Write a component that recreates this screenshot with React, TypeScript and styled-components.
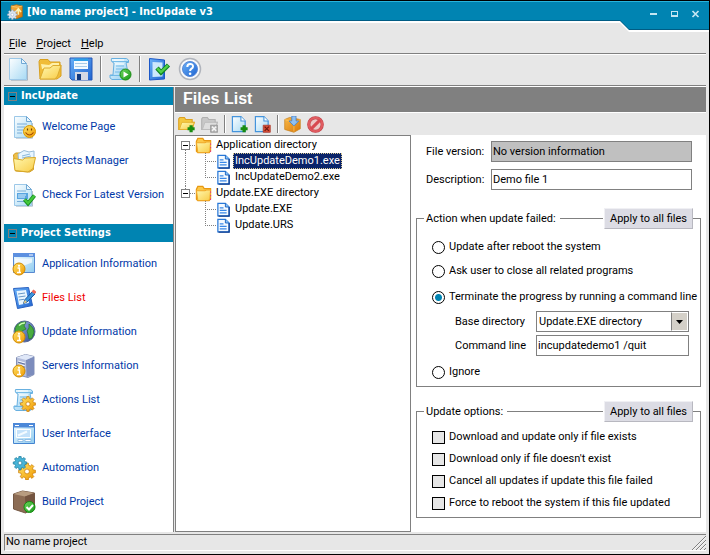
import React, { useState } from "react";
import styled, { createGlobalStyle } from "styled-components";

const ui = 'Roboto, "DejaVu Sans Condensed", sans-serif';
const heading = '"DejaVu Sans Condensed", "DejaVu Sans", sans-serif';
const blue = "#0084b2";
const face = "#e7e7e7";
const line = "#808080";

const GlobalStyle = createGlobalStyle`
  * { box-sizing: border-box; }
  body { margin: 0; font: 11px/16px ${ui}; color: #000; background: ${face}; }
  button, input, select { font: inherit; color: inherit; margin: 0; border-radius: 0; }
`;

const Window = styled.div`
  min-height: 100vh;
  display: flex;
  flex-direction: column;
  border: 1px solid #000;
  background: ${face};
`;

const TitleBar = styled.header`
  display: flex;
  align-items: flex-start;
  height: 31px;
`;

const TitleMain = styled.div`
  flex: 1;
  height: 22px;
  display: flex;
  align-items: center;
  gap: 4px;
  padding-left: 6px;
  background: linear-gradient(#28b4dc 0 1px, ${blue} 1px 19px, #005c84 19px 20px, #fff 20px);
`;

const TitleText = styled.h1`
  margin: 0;
  font: bold 11px/20px ${heading};
  color: #fff;
  white-space: nowrap;
`;

const WindowButtons = styled.div`
  height: 31px;
  display: flex;
  gap: 5px;
  padding: 5px 5px 0 17px;
  background: linear-gradient(#28b4dc 0 1px, ${blue} 1px 28px, #005c84 28px 29px, #fff 29px);
`;

const IconButton = styled.button<{ $size: number }>`
  display: flex;
  align-items: center;
  justify-content: center;
  width: ${(p) => p.$size}px;
  height: ${(p) => p.$size}px;
  padding: 0;
  border: 0;
  background: none;
`;

const Body = styled.div`
  flex: 1;
  display: flex;
  flex-direction: column;
  padding: 0 3px 3px;
`;

const Menu = styled.nav`
  display: flex;
  gap: 10px;
  height: 23px;
  padding: 3px 5px 0;
  border-bottom: 1px solid #fff;
  box-shadow: inset 0 -1px ${line};
`;

const MenuItem = styled.button`
  height: 18px;
  padding: 0;
  border: 0;
  background: none;
`;

const ToolBar = styled.div`
  display: flex;
  align-items: center;
  gap: 7px;
  height: 32px;
  padding: 0 3px 3px;
  border-bottom: 1px solid #fff;
  box-shadow: inset 0 -1px ${line};
`;

const Separator = styled.span<{ $height: number }>`
  width: 1px;
  height: ${(p) => p.$height}px;
  background: ${line};
  box-shadow: 1px 0 #fff;
`;

const Main = styled.div`
  flex: 1;
  display: flex;
`;

const Sidebar = styled.aside`
  flex: none;
  width: 171px;
  background: #fff;
  border-right: 1px solid ${face};
  box-shadow: inset -1px 0 ${line};
  padding-right: 1px;
`;

const SideHeading = styled.h2`
  display: flex;
  align-items: center;
  gap: 4px;
  height: 18px;
  margin: 0;
  padding-left: 4px;
  background: ${blue};
  color: #fff;
  font: bold 11px/18px ${heading};
`;

const SideToggle = styled.button`
  width: 9px;
  height: 9px;
  padding: 3px 1px;
  border: 1px solid ${line};
  background: #000 content-box;
`;

const SideList = styled.ul`
  list-style: none;
  margin: 0;
  padding: 5px 0 12px 8px;
`;

const SideItem = styled.li`
  display: flex;
  align-items: center;
  gap: 6px;
  height: 34px;
`;

const SideLink = styled.a<{ $current?: boolean }>`
  line-height: 18px;
  color: ${(p) => (p.$current ? "#f00000" : "#0038a8")};
  text-decoration: none;
  white-space: nowrap;
`;

const Content = styled.main`
  flex: 1;
  min-width: 0;
  display: flex;
  flex-direction: column;
`;

const PageTitle = styled.h2`
  height: 26px;
  margin: 0;
  padding-left: 8px;
  border-bottom: 1px solid #fff;
  background: ${line};
  color: #fff;
  font: bold 16px/24px "Liberation Sans", Arial, sans-serif;
`;

const FileBar = styled.div`
  display: flex;
  align-items: center;
  gap: 6px;
  height: 22px;
  padding-left: 3px;
`;

const Columns = styled.div`
  flex: 1;
  display: flex;
`;

const Tree = styled.div`
  flex: none;
  width: 236px;
  padding: 1px 5px;
  border: 1px solid ${line};
  background: #fff;
`;

const TreeRow = styled.div`
  display: flex;
  align-items: center;
  height: 16px;
`;

const Label = styled.span<{ $selected?: boolean }>`
  padding: 0 1px;
  line-height: 14px;
  margin-left: 2px;
  white-space: nowrap;
  border: 1px ${(p) => (p.$selected ? "dotted #d8c890" : "solid transparent")};
  background: ${(p) => (p.$selected ? "#0a246a" : "transparent")};
  color: ${(p) => (p.$selected ? "#fff" : "#000")};
`;

const ToggleCell = styled.div`
  display: flex;
  flex-direction: column;
  align-items: center;
  width: 9px;
  height: 16px;
`;

const Stem = styled.span<{ $on: boolean; $height: number }>`
  height: ${(p) => p.$height}px;
  border-left: 1px dotted ${(p) => (p.$on ? line : "transparent")};
`;

const Branch = styled.span`
  width: 5px;
  border-top: 1px dotted ${line};
`;

const TreeToggle = styled.button`
  width: 9px;
  height: 9px;
  padding: 3px 1px;
  border: 1px solid ${line};
  background: #000 content-box;
`;

const Details = styled.form`
  flex: 1;
  min-width: 0;
  padding: 6px 5px;
  background: #fff;
`;

const FieldRow = styled.div`
  display: flex;
  align-items: center;
  height: 21px;
  margin: 0 9px 7px 10px;
`;

const FieldLabel = styled.label<{ $width: number }>`
  width: ${(p) => p.$width}px;
  white-space: nowrap;
`;

const TextInput = styled.input`
  flex: 1;
  min-width: 0;
  height: 21px;
  padding: 0 1px;
  border: 1px solid ${line};
  background: #fff;
  outline: 0;
  &:read-only { background: #c0c0c0; }
`;

const Group = styled.fieldset<{ $top: number }>`
  min-width: 0;
  margin: ${(p) => p.$top}px 0 0;
  padding: 0 7px 6px;
  border: 1px solid ${line};
`;

const Legend = styled.legend`
  display: flex;
  align-items: center;
  width: 100%;
  height: 21px;
  padding: 0 0 0 2px;
  gap: 4px;
  white-space: nowrap;
  &::before { content: ""; order: 1; flex: 1; height: 1px; background: ${line}; }
`;

const ApplyButton = styled.button`
  order: 2;
  width: 89px;
  height: 21px;
  margin-left: -3px;
  padding: 0;
  border: 1px solid #f0f0f4;
  border-right-color: #b8b8c0;
  border-bottom-color: #b8b8c0;
  background: #dcdce4;
`;

const Choices = styled.div<{ $gap: number; $top: number }>`
  display: flex;
  flex-direction: column;
  gap: ${(p) => p.$gap}px;
  padding: ${(p) => p.$top}px 0 0 8px;
`;

const Choice = styled.label`
  display: flex;
  align-items: center;
  gap: 4px;
  height: 16px;
  white-space: nowrap;
`;

const Radio = styled.input.attrs({ type: "radio" })`
  appearance: none;
  flex: none;
  width: 13px;
  height: 13px;
  border: 1px solid #000;
  border-radius: 50%;
  background: #fff;
  &:checked { background: radial-gradient(circle, ${blue} 3px, #fff 4px); }
`;

const Check = styled.input.attrs({ type: "checkbox" })`
  appearance: none;
  flex: none;
  width: 13px;
  height: 13px;
  border: 1px solid #000;
  background: #e6e6e6;
  &:checked { background: ${blue}; }
`;

const CommandGroup = styled.div`
  display: flex;
  flex-direction: column;
  gap: 6px;
  padding: 2px 0 0;
`;

const CommandFields = styled.div`
  display: flex;
  flex-direction: column;
  gap: 3px;
  padding: 0 4px 0 23px;
`;

const CommandRow = styled.div`
  display: flex;
  align-items: center;
`;

const SelectBox = styled.div`
  flex: 1;
  display: flex;
  height: 21px;
  border: 1px solid ${line};
`;

const Select = styled.select`
  flex: 1;
  min-width: 0;
  appearance: none;
  padding: 0 2px;
  border: 0;
  background: #fff;
  outline: 0;
`;

const SelectArrow = styled.span`
  display: flex;
  align-items: center;
  justify-content: center;
  width: 17px;
  border: 1px solid #fff;
  border-left-color: ${line};
  background: #d4d0c8;
`;

const StatusBar = styled.footer`
  display: flex;
  justify-content: space-between;
  align-items: flex-end;
  height: 17px;
  margin-top: 2px;
  padding-left: 1px;
  border: 1px solid ${line};
  border-right: 0;
  border-bottom-color: #fff;
`;

/* ---------- icons ---------- */

const gear = (cx: number, cy: number, r: number, n = 8) => {
  const pts: string[] = [];
  for (let i = 0; i < n; i++) {
    [[-0.3, 0.76], [-0.2, 1], [0.2, 1], [0.3, 0.76]].forEach(([o, k]) => {
      const a = ((i + o) / n) * Math.PI * 2;
      pts.push(`${(cx + Math.cos(a) * r * k).toFixed(2)},${(cy + Math.sin(a) * r * k).toFixed(2)}`);
    });
  }
  return pts.join(" ");
};

const Gear = ({ x, y, r, fill = "url(#gold)", edge = "#c87800" }: { x: number; y: number; r: number; fill?: string; edge?: string }) => (
  <g>
    <polygon points={gear(x, y, r)} fill={fill} stroke={edge} strokeWidth=".7" strokeLinejoin="round" />
    <circle cx={x} cy={y} r={r * 0.28} fill="#fff" stroke={edge} strokeWidth=".7" />
  </g>
);

const Info = ({ x, y }: { x: number; y: number }) => (
  <g>
    <circle cx={x} cy={y} r="6" fill="url(#gold)" stroke="#d08a00" />
    <path d={`M${x - 1.5} ${y - 1}h2v4M${x - 2} ${y + 3.5}h4`} stroke="#fff" strokeWidth="1.4" fill="none" />
    <circle cx={x} cy={y - 3.2} r="1.1" fill="#fff" />
  </g>
);

const Page = () => (
  <g>
    <path d="M4 23.200h16.500V8" fill="none" stroke="#5c7890" strokeOpacity=".45" />
    <path d="M2.500 1.500h12l5 5v16h-17z" fill="url(#paper)" stroke="#9cc8e8" />
    <path d="M14.500 1.500v5h5z" fill="#e8f6ff" stroke="#70a8d4" />
  </g>
);

const Tick = () => <path d="M12.500 16.500l3.500 4 6.500-8" fill="none" stroke="#128a1c" strokeWidth="4" />;
const TickFront = () => <path d="M12.800 16.700l3.200 3.500 6.300-7.500" fill="none" stroke="#44c83c" strokeWidth="2.400" />;

const Scroll = () => (
  <g>
    <path d="M3.500 1.500h15q3 1 2 4h-2.500l2.500 13q0 4-3 4H4q-3-1-2-4.500h3L6 6Q2.500 5 3.500 1.500z" fill="url(#sky)" stroke="#68b0e0" />
    <path d="M4 4.500h16M8 9h8M8 12h8M7 15h9M2.500 18.500h13" fill="none" stroke="#60b0e4" strokeOpacity=".8" />
    <path d="M6 3h10M7 7h9" stroke="#fff" />
  </g>
);

const glyphs: Record<string, React.ReactNode> = {
  app: (
    <g>
      <path d="M6 3l8-2 9 2v16l-9 3-8-3z" fill="url(#box)" stroke="#b86400" />
      <path d="M6 3l9 2 8-2" stroke="#ffd080" fill="none" />
      <path d="M17 16V9m-4 3l4-5 4 5" stroke="#fff4b0" strokeWidth="2.400" fill="none" />
      <Gear x={8} y={16} r={7.5} fill="#d8e4f0" edge="#8c9cb8" />
    </g>
  ),
  page: <Page />,
  folder: (
    <g>
      <path d="M1 4.500l1-2h8l2 2.500h10v3h1v11L19 22H2z" fill="#f0bc38" stroke="#d8a020" />
      <path d="M3 7l8 1 3-2h7v6H4z" fill="#fff0a8" />
      <path d="M2 22L6 11h6l3-2.500h8L19.500 19l-2.500 3z" fill="url(#yellow)" stroke="#dcac30" />
    </g>
  ),
  save: (
    <g>
      <path d="M1 1h22v22H3l-2-2z" fill="url(#disk)" stroke="#2458b8" />
      <path d="M5 2h14v10H5z" fill="#f4fbff" />
      <path d="M6 6.500h12M6 9.500h12" stroke="#a8cce8" />
      <path d="M6 15h13v8H6z" fill="#d4d8e4" />
      <path d="M8 17h4v6H8z" fill="#103880" />
      <path d="M5 1.500h14v2.500H5z" fill="#30a0e8" />
    </g>
  ),
  run: (
    <g>
      <Scroll />
      <circle cx="17.500" cy="17.500" r="5.500" fill="url(#green)" stroke="#168a10" />
      <path d="M15.500 14.500l5 3-5 3z" fill="#fff" />
    </g>
  ),
  tasktick: (
    <g>
      <path d="M2.500 1.500l15 1.500v19l-15 1z" fill="url(#disk)" stroke="#1c58c8" />
      <path d="M5.500 5l10 .5v14l-10 .5z" fill="#cce8fc" />
      <path d="M10 11l4 4.500L21.500 8" fill="none" stroke="#108424" strokeWidth="4.500" />
      <path d="M10.300 11.300l3.700 3.700 7-6.600" fill="none" stroke="#50d048" strokeWidth="2.400" />
    </g>
  ),
  help: (
    <g>
      <circle cx="12" cy="12" r="10.500" fill="#f8fafc" stroke="#b0b4bc" strokeWidth="1.500" />
      <circle cx="12" cy="12" r="7.500" fill="url(#disk)" stroke="#5888d8" />
      <path d="M9.300 10q0-3 2.900-3t2.800 2.500q0 1.200-1.500 2.200t-1.400 2.300" fill="none" stroke="#fff" strokeWidth="2" />
      <circle cx="12.100" cy="16.800" r="1.300" fill="#fff" />
    </g>
  ),
  welcome: (
    <g>
      <Page />
      <path d="M5 9h10M5 12h8M5 15h6M5 18h5" stroke="#78acd8" />
      <circle cx="17.500" cy="16.500" r="6" fill="url(#gold)" stroke="#d89800" />
      <path d="M15.500 13.500v2m4-2v2" stroke="#704000" strokeWidth="1.200" />
      <path d="M13.500 17.500q4 5 8 0" fill="none" stroke="#a04800" strokeWidth="1.200" />
    </g>
  ),
  projects: (
    <g>
      <path d="M1.500 6l2-2h6l2 2.500 10 1v13l-4 2.500-14-1z" fill="#f0c048" stroke="#d09c20" />
      <path d="M6 5l6-3.500 5 1.500 5-1v10l-15 3z" fill="#e8f6ff" stroke="#98bcd8" />
      <path d="M10 7l8-2M10 9l9-2" stroke="#88b8dc" />
      <path d="M1.500 9.500l9 1.500 2.500-2 10.500-.5-2.500 11-5 3.500L3 21.500z" fill="url(#yellow)" stroke="#d8a828" />
    </g>
  ),
  latest: (
    <g>
      <Page />
      <path d="M5 10h11v6H5z" fill="#58a4e0" />
      <path d="M5 8h9M5 18.500h8" stroke="#78acd8" />
      <path d="M6 12h8M6 14h7" stroke="#d8f0ff" />
      <Tick /><TickFront />
    </g>
  ),
  appinfo: (
    <g>
      <path d="M1.500 1.500h21v19h-21z" fill="url(#sky)" stroke="#5888d0" />
      <path d="M1 1h22v4H1z" fill="#5c90e0" />
      <path d="M17 3h4" stroke="#fff" />
      <path d="M3 6.500h17v4L3 17z" fill="#fff" fillOpacity=".7" />
      <Info x={7} y={17} />
    </g>
  ),
  edit: (
    <g>
      <path d="M1.500 2.500l15-1 4 18-15 3z" fill="url(#disk)" stroke="#2860c0" />
      <path d="M4.500 5L14 4l3 13L7 19z" fill="#e8f6ff" />
      <path d="M6 8l7-1M6.500 11l7-1M7 14l5-.7" stroke="#6898c8" />
      <path d="M21 5l-8 8.500-1.500 4L15 16l8-8z" fill="#3c94dc" stroke="#1c58a0" />
      <path d="M20.500 4.500l2.800 2.500" stroke="#f06858" strokeWidth="3" />
      <path d="M13 14l-1.500 3.500L15 16z" fill="#f0d080" />
    </g>
  ),
  globe: (
    <g>
      <circle cx="12.500" cy="11.500" r="10.500" fill="url(#globe)" stroke="#586898" />
      <path d="M5 5q4-4 9-3l-2 4 2 3-4 2-2 4-5-3q0-5 2-7zM17 4q5 4 5 8l-2 6-3 1-1-5-1-3 2-3z" fill="#48ac40" stroke="#287828" strokeWidth=".7" />
      <path d="M7 5.500q3-3 6-2.500" stroke="#d0ffb8" strokeWidth="1.500" fill="none" />
      <Info x={7} y={17} />
    </g>
  ),
  server: (
    <g>
      <path d="M4.500 3.500l9-3 8.500 2v18l-6 3-11.500-3z" fill="#b4bedc" stroke="#8490b4" />
      <path d="M14 6l8-3.500v18L14.500 23z" fill="#7c8cbc" />
      <path d="M4.500 3.500l9-3L22 2.500 14 6z" fill="#e0e8f8" />
      <path d="M6 7l7 2M6 10l7 2M6 13l7 2" stroke="#f4f8ff" strokeWidth="1.300" />
      <path d="M6 8.200l7 2M6 11.200l7 2" stroke="#6070a0" />
      <Info x={7} y={17} />
    </g>
  ),
  actions: (<g><Scroll /><Gear x={16} y={16} r={7.500} /></g>),
  interface: (
    <g>
      <path d="M1.500 1.500h21v20h-21z" fill="url(#sky)" stroke="#4484d0" />
      <path d="M1 1h22v4.500H1z" fill="#4c88d8" />
      <path d="M3 3.500h4m10 0h4" stroke="#fff" />
      <path d="M4.500 7.500h14v8h-14z" fill="#c4e2fa" stroke="#fff" />
      <path d="M6 17.500h5v2H6zm7 0h6v2h-6z" fill="#fff" stroke="#78acdc" strokeWidth=".7" />
      <path d="M6 13.500l9-4" stroke="#f4fbff" strokeWidth="2" />
    </g>
  ),
  automation: (
    <g>
      <Gear x={15} y={15.500} r={8.500} />
      <Gear x={8} y={7} r={6.800} fill="#48b4d8" edge="#187898" />
    </g>
  ),
  build: (
    <g>
      <path d="M1.500 4l9-3 12 2v15l-9 5-12-4z" fill="#8c6c54" stroke="#745844" />
      <path d="M1.500 4l9-3 12 2L13 6.500z" fill="#b89c80" />
      <path d="M13 6.500L22.500 3v15L13.500 23z" fill="#745440" />
      <circle cx="17.500" cy="17" r="5.500" fill="url(#green)" stroke="#168a10" />
      <path d="M14.500 17l2.500 2.500 4-4.500" fill="none" stroke="#fff" strokeWidth="2" />
    </g>
  ),
  folderadd: (
    <g>
      <path d="M1 4l1.500-2H9l2 3h9v4h3l-3 10H1z" fill="#f4c840" stroke="#dca020" strokeWidth="1.500" />
      <path d="M2 19L5.500 9H23l-3.500 10z" fill="url(#yellow)" stroke="#e0ac28" />
      <path d="M18.500 13v10m-5-5h10" stroke="#188c10" strokeWidth="4.500" />
    </g>
  ),
  folderdel: (
    <g>
      <path d="M1 4l1.500-2H9l2 3h9v4h3l-3 10H1z" fill="#c8c8c8" stroke="#b0b0b0" strokeWidth="1.500" />
      <path d="M2 19L5.500 9H23l-3.500 10z" fill="#dedede" stroke="#b8b8b8" />
      <path d="M13.500 13h10v10h-10z" fill="#b0b0b0" stroke="#909090" />
      <path d="M15.500 15l6 6m0-6l-6 6" stroke="#f4f4f4" strokeWidth="2" />
    </g>
  ),
  fileadd: (
    <g>
      <path d="M2 1h12l6 6v15H2z" fill="url(#paper)" stroke="#4494dc" strokeWidth="1.700" />
      <path d="M14 1v6h6" fill="#fff" stroke="#4494dc" strokeWidth="1.500" />
      <path d="M18.500 13v10m-5-5h10" stroke="#188c10" strokeWidth="4.500" />
    </g>
  ),
  filedel: (
    <g>
      <path d="M2 1h12l6 6v15H2z" fill="url(#paper)" stroke="#4494dc" strokeWidth="1.700" />
      <path d="M14 1v6h6" fill="#fff" stroke="#4494dc" strokeWidth="1.500" />
      <path d="M13 13h10v10H13z" fill="#d85038" stroke="#a83020" />
      <path d="M15 15l6 6m0-6l-6 6" stroke="#701810" strokeWidth="1.800" />
    </g>
  ),
  extract: (
    <g>
      <path d="M1 5l7-3 15 3v13l-9 5-13-4z" fill="url(#box)" stroke="#c88018" />
      <path d="M1 5l13 4 9-4M14 9v13" stroke="#ffc860" fill="none" />
      <path d="M11 0h6v7h4l-7 7-7-7h4z" fill="#90c0f0" stroke="#3878c8" />
    </g>
  ),
  stop: (
    <g>
      <circle cx="12" cy="12" r="9.500" fill="#ecc8c8" stroke="#c04048" strokeWidth="4.500" />
      <circle cx="12" cy="12" r="9.500" fill="none" stroke="#e05c60" strokeWidth="3" />
      <path d="M5.500 18.500l13-13" stroke="#d84850" strokeWidth="4.500" />
    </g>
  ),
  treefolder: (
    <g>
      <path d="M2 6l2-4h7l2 3h9v14l-2 3H4l-2-2z" fill="#fcc848" stroke="#e89810" strokeWidth="1.700" />
      <path d="M2 8h12l2-1h6l-1 13-2 2H4z" fill="url(#yellow)" stroke="#f0a828" strokeWidth="1.500" />
      <path d="M22 9v2m0 3v2m0 3v2" stroke="#e83878" strokeWidth="1.500" />
    </g>
  ),
  treefile: (
    <g>
      <path d="M3 2h12l6 6v14H3z" fill="#f4faff" stroke="#2878d8" strokeWidth="2" />
      <path d="M21 8v14.500H4" fill="none" stroke="#0c3c90" strokeWidth="2" />
      <path d="M15 2v6h6" fill="#8cc4f8" stroke="#1c64c0" strokeWidth="1.500" />
      <path d="M6 9.500h6M6 13.500h11M6 17.500h11" stroke="#3888e8" strokeWidth="2" />
    </g>
  ),
};

const Icon = ({ name, size = 24 }: { name: string; size?: number }) => (
  <svg width={size} height={size} viewBox="0 0 24 24" aria-hidden="true">{glyphs[name]}</svg>
);

const ramps: [string, string, string][] = [
  ["gold", "#ffe468", "#f09800"],
  ["box", "#f8b848", "#d87808"],
  ["yellow", "#fff8b0", "#f8cc48"],
  ["sky", "#f0fbff", "#90ccf0"],
  ["paper", "#fcfeff", "#a8daf4"],
  ["disk", "#68b0f8", "#2064d0"],
  ["green", "#70d860", "#189818"],
  ["globe", "#a0c0f0", "#304890"],
];

const Gradients = () => (
  <defs>
    {ramps.map(([id, a, b]) => (
      <linearGradient key={id} id={id} x1="0" y1="0" x2="1" y2="1">
        <stop stopColor={a} /><stop offset="1" stopColor={b} />
      </linearGradient>
    ))}
  </defs>
);

/* ---------- content ---------- */

const mainTools = [["page", "New"], ["folder", "Open"], ["save", "Save"], null, ["run", "Run"], null, ["tasktick", "Check for update"], ["help", "Help"]];
const fileTools = [["folderadd", "Add directory"], ["folderdel", "Remove directory"], null, ["fileadd", "Add file"], ["filedel", "Remove file"], null, ["extract", "Extract"], ["stop", "Cancel"]];

const sections = [
  { title: "IncUpdate", items: [["welcome", "Welcome Page"], ["projects", "Projects Manager"], ["latest", "Check For Latest Version"]] },
  {
    title: "Project Settings",
    items: [
      ["appinfo", "Application Information"], ["edit", "Files List"], ["globe", "Update Information"], ["server", "Servers Information"],
      ["actions", "Actions List"], ["interface", "User Interface"], ["automation", "Automation"], ["build", "Build Project"],
    ],
  },
];

const folders = [
  { name: "Application directory", files: ["IncUpdateDemo1.exe", "IncUpdateDemo2.exe"] },
  { name: "Update.EXE directory", files: ["Update.EXE", "Update.URS"] },
];

const options = [
  "Download and update only if file exists",
  "Download only if file doesn't exist",
  "Cancel all updates if update this file failed",
  "Force to reboot the system if this file updated",
];

const Tools = ({ items, size, bar }: { items: (string[] | null)[]; size: number; bar: number }) => (
  <>
    {items.map((t, i) =>
      t ? (
        <IconButton key={i} type="button" $size={size} aria-label={t[1]}><Icon name={t[0]} size={size} /></IconButton>
      ) : (
        <Separator key={i} $height={bar} />
      )
    )}
  </>
);

const FileGuide = ({ trunk, last }: { trunk: boolean; last: boolean }) => (
  <svg width="35" height="16" aria-hidden="true">
    <path d={`${trunk ? "M4.500 0v16" : ""}M24.500 0v${last ? 8 : 16}M24 8.500h11`} stroke={line} strokeDasharray="1 1" fill="none" />
  </svg>
);

export default function App() {
  const [action, setAction] = useState("terminate");
  const radio = (id: string, text: string) => (
    <Choice>
      <Radio name="action" checked={action === id} onChange={() => setAction(id)} />
      {text}
    </Choice>
  );

  return (
    <Window>
      <GlobalStyle />
      <TitleBar>
        <TitleMain>
          <svg width="16" height="16" viewBox="0 0 24 24" aria-hidden="true"><Gradients />{glyphs.app}</svg>
          <TitleText>[No name project] - IncUpdate v3</TitleText>
        </TitleMain>
        <svg width="9" height="31" aria-hidden="true">
          <path d="M0 0h9v31L0 22z" fill="#fff" />
          <path d="M0 0h9v29L0 20z" fill="#005c84" />
          <path d="M0 1h9v27L0 19z" fill={blue} />
          <path d="M0 0h9v1H0z" fill="#28b4dc" />
        </svg>
        <WindowButtons>
          <IconButton $size={16} aria-label="Minimize"><svg width="16" height="16"><path d="M4 7h7v2H4z" fill="#c4e6f2" /></svg></IconButton>
          <IconButton $size={16} aria-label="Maximize"><svg width="16" height="16"><path d="M4 5h7v6H4zM5 6v3h5V6z" fill="#c4e6f2" fillRule="evenodd" /></svg></IconButton>
          <IconButton $size={16} aria-label="Close"><svg width="16" height="16"><path d="M4.500 5l6 6m0-6l-6 6" stroke="#c4e6f2" strokeWidth="1.700" /></svg></IconButton>
        </WindowButtons>
      </TitleBar>
      <Body>
        <Menu>
          <MenuItem><u>F</u>ile</MenuItem>
          <MenuItem><u>P</u>roject</MenuItem>
          <MenuItem><u>H</u>elp</MenuItem>
        </Menu>
        <ToolBar><Tools items={mainTools} size={24} bar={26} /></ToolBar>
        <Main>
          <Sidebar>
            {sections.map((s) => (
              <section key={s.title}>
                <SideHeading><SideToggle aria-label={`Collapse ${s.title}`} />{s.title}</SideHeading>
                <SideList>
                  {s.items.map(([icon, text]) => (
                    <SideItem key={text}>
                      <Icon name={icon} />
                      <SideLink href="#" $current={text === "Files List"}>{text}</SideLink>
                    </SideItem>
                  ))}
                </SideList>
              </section>
            ))}
          </Sidebar>
          <Content>
            <PageTitle>Files List</PageTitle>
            <FileBar><Tools items={fileTools} size={17} bar={18} /></FileBar>
            <Columns>
              <Tree>
                {folders.map((f, i) => (
                  <div key={f.name}>
                    <TreeRow>
                      <ToggleCell>
                        <Stem $on={i > 0} $height={4} />
                        <TreeToggle aria-label={`Collapse ${f.name}`} />
                        <Stem $on={i === 0} $height={3} />
                      </ToggleCell>
                      <Branch />
                      <Icon name="treefolder" size={17} />
                      <Label>{f.name}</Label>
                    </TreeRow>
                    {f.files.map((n, k) => (
                      <TreeRow key={n}>
                        <FileGuide trunk={i === 0} last={k === f.files.length - 1} />
                        <Icon name="treefile" size={15} />
                        <Label $selected={n === "IncUpdateDemo1.exe"}>{n}</Label>
                      </TreeRow>
                    ))}
                  </div>
                ))}
              </Tree>
              <Details>
                <FieldRow>
                  <FieldLabel htmlFor="version" $width={65}>File version:</FieldLabel>
                  <TextInput id="version" readOnly value="No version information" />
                </FieldRow>
                <FieldRow>
                  <FieldLabel htmlFor="description" $width={65}>Description:</FieldLabel>
                  <TextInput id="description" defaultValue="Demo file 1" />
                </FieldRow>
                <Group $top={18}>
                  <Legend>Action when update failed:<ApplyButton type="button">Apply to all files</ApplyButton></Legend>
                  <Choices $gap={8} $top={10}>
                    {radio("reboot", "Update after reboot the system")}
                    {radio("ask", "Ask user to close all related programs")}
                    <CommandGroup>
                      {radio("terminate", "Terminate the progress by running a command line")}
                      <CommandFields>
                        <CommandRow>
                          <FieldLabel htmlFor="base" $width={81}>Base directory</FieldLabel>
                          <SelectBox>
                            <Select id="base"><option>Update.EXE directory</option><option>Application directory</option></Select>
                            <SelectArrow><svg width="7" height="4"><path d="M0 0h7L3.500 4z" /></svg></SelectArrow>
                          </SelectBox>
                        </CommandRow>
                        <CommandRow>
                          <FieldLabel htmlFor="command" $width={81}>Command line</FieldLabel>
                          <TextInput id="command" defaultValue="incupdatedemo1 /quit" />
                        </CommandRow>
                      </CommandFields>
                    </CommandGroup>
                    {radio("ignore", "Ignore")}
                  </Choices>
                </Group>
                <Group $top={14}>
                  <Legend>Update options:<ApplyButton type="button">Apply to all files</ApplyButton></Legend>
                  <Choices $gap={6} $top={7}>
                    {options.map((o) => (
                      <Choice key={o}><Check />{o}</Choice>
                    ))}
                  </Choices>
                </Group>
              </Details>
            </Columns>
          </Content>
        </Main>
        <StatusBar>
          No name project
          <svg width="15" height="15" aria-hidden="true">
            <path d="M1 15L15 1M5 15L15 5M9 15l6-6M13 15l2-2" stroke={line} />
            <path d="M2 15L15 2M6 15l9-9M10 15l5-5" stroke="#fff" strokeOpacity=".6" />
          </svg>
        </StatusBar>
      </Body>
    </Window>
  );
}
